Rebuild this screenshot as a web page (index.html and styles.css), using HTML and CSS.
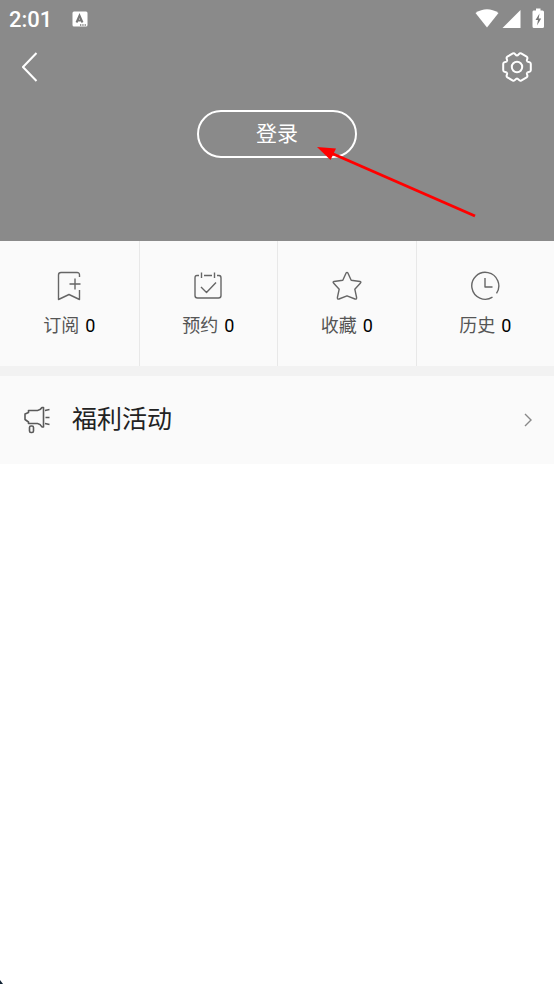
FILE: index.html
```html
<!DOCTYPE html>
<html lang="zh-CN">
<head>
<meta charset="utf-8">
<meta name="viewport" content="width=device-width, initial-scale=1">
<title>我的</title>
<link rel="stylesheet" href="styles.css">
</head>
<body>
<header class="hero">
  <div class="status">
    <span class="time">2:01</span>
    <svg class="status-app" width="16" height="16" viewBox="0 0 16 16" aria-hidden="true">
      <rect x="0.5" y="0.5" width="15" height="15" rx="1.5" fill="#fff"/>
      <path d="M4.500 11.500 7.500 4.500 10.500 11.500M5.600 9.500H9.400" fill="none" stroke="#777" stroke-width="2"/>
      <path d="M8 14h1.300M10.300 14h1.300M12.600 14h1.300" stroke="#777" stroke-width="1.400"/>
    </svg>
    <svg class="status-signal" width="70" height="22" viewBox="0 0 70 22" aria-hidden="true">
      <path d="M0.500 5Q12 -2.500 23.500 5L12 19.500Z" fill="#fff"/>
      <path d="M45.500 2V20H27.500Z" fill="#fff"/>
      <path d="M58.500 2.500H61V0.500H65.500V2.500H67.500Q69 2.500 69 4V18.500Q69 20 67.500 20H59Q57.500 20 57.500 18.500V4Q57.500 2.500 58.500 2.500Z" fill="#fff"/>
      <path d="M64.500 5.500 60.500 12H63L62 17.500 66.200 10.500H63.700Z" fill="#777"/>
    </svg>
  </div>
  <nav class="toolbar">
    <button class="icon-button" type="button" aria-label="返回">
      <svg width="16" height="30" viewBox="0 0 16 30"><path d="M14.500 1 1 15 14.500 29" fill="none" stroke="#fff" stroke-width="2"/></svg>
    </button>
    <button class="icon-button" type="button" aria-label="设置">
      <svg width="30" height="30" viewBox="-15 -15 30 30" fill="none" stroke="#fff" stroke-width="2">
        <defs><path id="tooth" d="M10 -5.800C10.900 -4.300 13.800 -5.600 13.800 -3.200V3.200C13.800 5.600 10.900 4.300 10 5.800"/></defs>
        <use href="#tooth"/>
        <use href="#tooth" transform="rotate(60)"/>
        <use href="#tooth" transform="rotate(120)"/>
        <use href="#tooth" transform="rotate(180)"/>
        <use href="#tooth" transform="rotate(240)"/>
        <use href="#tooth" transform="rotate(300)"/>
        <circle r="5.200"/>
      </svg>
    </button>
  </nav>
  <div class="login-area">
    <button class="login" type="button">登录</button>
    <svg class="pointer" width="160" height="72" viewBox="0 0 160 72" aria-hidden="true">
      <path d="M14 7 158 70" stroke="#f00" stroke-width="3"/>
      <path d="M0 1 19 2.500 13.500 14Z" fill="#f00"/>
    </svg>
  </div>
</header>
<main>
  <nav class="tabs">
    <a class="tab" href="#subscribe">
      <svg class="tab-icon" width="30" height="30" viewBox="0 0 30 30">
        <path d="M25.500 6V4Q25.500 1.500 23 1.500H7Q4.500 1.500 4.500 4V28.500L15 23.500 25.500 28.500V19M15.500 13H26.500M21 7.500V18.500"/>
      </svg>
      <span class="tab-label">订阅 <b class="count">0</b></span>
    </a>
    <a class="tab" href="#reserve">
      <svg class="tab-icon" width="30" height="30" viewBox="0 0 30 30">
        <path d="M6 4.500H4Q2 4.500 2 7V24.500Q2 27 4.500 27H25.500Q28 27 28 24.500V7Q28 4.500 26 4.500H24M11 4.500H19M8.500 1.500V7M21.500 1.500V7M8 16 13.500 21.500 23 11.500"/>
      </svg>
      <span class="tab-label">预约 <b class="count">0</b></span>
    </a>
    <a class="tab" href="#favorites">
      <svg class="tab-icon" width="30" height="30" viewBox="0 0 30 30">
        <path d="M14 2.200Q15 0.500 16 2.200L19.200 9.300 28 10.500Q29.600 11 28.300 12.300L22.800 18.200 24.600 26.500Q24.700 28.500 23 28L15 24.800 7 28Q5.300 28.500 5.400 26.500L7.200 18.200 1.700 12.300Q0.400 11 2 10.500L10.800 9.300Z"/>
      </svg>
      <span class="tab-label">收藏 <b class="count">0</b></span>
    </a>
    <a class="tab" href="#history">
      <svg class="tab-icon" width="30" height="30" viewBox="0 0 30 30">
        <path d="M26.500 22.300A13.500 13.500 0 1 0 22.500 26.200M15 7V16H22.500"/>
      </svg>
      <span class="tab-label">历史 <b class="count">0</b></span>
    </a>
  </nav>
  <a class="promo" href="#welfare">
    <svg width="26" height="28" viewBox="0 0 26 28" fill="none" stroke="#5a5a5a" stroke-width="1.600" stroke-linejoin="round" aria-hidden="true">
      <path d="M4.500 4.500H13.500Q16.500 4 18 1.500H19.500V21H18Q16.500 18 13.500 17.500H4.500V16L1 13.500V8L4.500 6.500ZM21 4.500 25.500 3.500M21.500 11.500H25.500M21 17.500 25.500 18.500"/>
      <rect x="5.500" y="20" width="4" height="6.500" rx="1.500"/>
    </svg>
    <span class="promo-title">福利活动</span>
    <svg width="8" height="14" viewBox="0 0 8 14" aria-hidden="true"><path d="M1 1 7 7 1 13" fill="none" stroke="#888" stroke-width="1.400"/></svg>
  </a>
</main>
<svg class="corner" width="3" height="4" viewBox="0 0 3 4" aria-hidden="true"><path d="M0 0 3 4H0Z" fill="#123"/></svg>
</body>
</html>
```

FILE: styles.css
```css
* { box-sizing: border-box; }

body {
  position: relative;
  min-height: 100vh;
  margin: 0;
  background: #fff;
  font-family: Roboto, "Noto Sans CJK SC", sans-serif;
}

svg { display: block; flex: none; }
a { color: inherit; text-decoration: none; }

button {
  padding: 0;
  border: 0;
  background: none;
  color: #fff;
  font: inherit;
}

.hero {
  padding-bottom: 83px;
  background: #8a8a8a;
  color: #fff;
}

.status {
  display: flex;
  align-items: center;
  height: 38px;
  padding: 0 9px;
}

.time {
  font-size: 22px;
  font-weight: 500;
}

.status-app { margin-left: 20px; }
.status-signal { margin-left: auto; }

.toolbar {
  display: flex;
  align-items: center;
  justify-content: space-between;
  height: 58px;
  padding: 0 22px;
}

.login-area {
  position: relative;
  display: flex;
  justify-content: center;
  padding-top: 14px;
}

.login {
  width: 160px;
  height: 48px;
  padding-bottom: 4px;
  border: 2px solid #fff;
  border-radius: 24px;
  font-size: 21px;
}

.pointer {
  position: absolute;
  top: 50px;
  left: calc(50% + 40px);
}

.tabs {
  display: grid;
  grid-template-columns: repeat(4, 1fr);
  background: #fafafa;
  border-bottom: 10px solid #f2f2f2;
}

.tab {
  display: flex;
  flex-direction: column;
  align-items: center;
  gap: 12px;
  padding: 30px 0 28px;
  color: #555;
  font-size: 18px;
  line-height: 25px;
}

.tab + .tab { border-left: 1px solid #e8e8e8; }

.tab-label {
  display: flex;
  gap: 6px;
}

.tab-icon {
  fill: none;
  stroke: #666;
  stroke-width: 1.4;
  stroke-linejoin: round;
}

.count {
  color: #000;
  font-weight: 400;
}

.promo {
  display: flex;
  align-items: center;
  gap: 22px;
  height: 88px;
  padding: 0 22px 0 24px;
  background: #fafafa;
}

.promo-title {
  flex: 1;
  color: #222;
  font-size: 25px;
  line-height: 32px;
}

.corner {
  position: absolute;
  bottom: 0;
  left: 0;
}
```
